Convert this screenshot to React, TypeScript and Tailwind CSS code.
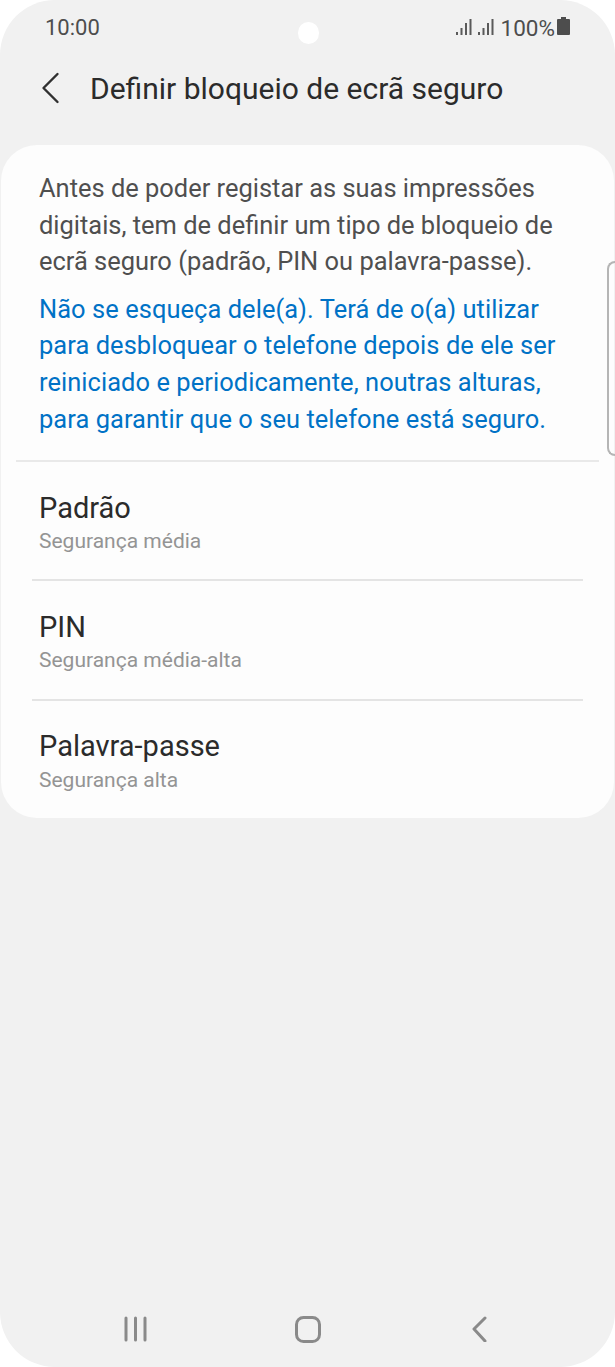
export default function App() {
  const rows = [
    { t: "Padrão", s: "Segurança média" },
    { t: "PIN", s: "Segurança média-alta" },
    { t: "Palavra-passe", s: "Segurança alta" },
  ];
  return (
    <div className="relative h-[1367px] w-[615px] overflow-hidden bg-white font-['Roboto',sans-serif]">
      <div className="relative flex h-[1367px] w-[615px] flex-col rounded-[55px] bg-[#f1f1f1] pl-px pr-px">
        <div className="flex h-[54px] items-center justify-between pl-[44px] pr-[44px] pt-[2px]">
          <span className="text-[22px] leading-[26px] text-[#4d4d4d]">10:00</span>
          <div className="flex items-center">
            <svg width="38" height="20" viewBox="0 0 38 20" fill="#5a5a5a" className="mr-[7px] mt-[-3px]">
              <rect x="0" y="15" width="2" height="3" />
              <rect x="4.5" y="11" width="2" height="7" />
              <rect x="9" y="6" width="2" height="12" />
              <rect x="13.5" y="2" width="2" height="16" />
              <rect x="22" y="15" width="2" height="3" />
              <rect x="26.5" y="11" width="2" height="7" />
              <rect x="31" y="6" width="2" height="12" />
              <rect x="35.5" y="2" width="2" height="16" />
            </svg>
            <span className="text-[22.5px] leading-[26px] text-[#4d4d4d]">100%</span>
            <svg width="13" height="20" viewBox="0 0 13 20" fill="#4d4d4d" className="ml-[2px] mt-[-4px]">
              <path d="M4 1h5v2h3a1 1 0 0 1 1 1v14a1 1 0 0 1-1 1H1a1 1 0 0 1-1-1V4a1 1 0 0 1 1-1h3z" />
            </svg>
          </div>
        </div>
        <div className="flex h-[71px] items-center pl-[40px] pb-[2px]">
          <svg width="20" height="32" viewBox="0 0 20 32" fill="none" stroke="#303030" strokeWidth="2.4" strokeLinecap="round" strokeLinejoin="round" className="mt-[-2px]">
            <path d="M16.5 2 L2.5 16 L16.5 30" />
          </svg>
          <span className="ml-[29px] text-[30px] leading-[36px] text-[#2b2b2b]">Definir bloqueio de ecrã seguro</span>
        </div>
        <div className="mt-[20px] rounded-[36px] bg-[#fdfdfd]">
          <div className="pl-[38px] pr-[38px] pb-[23px] pt-[25px] text-[25.45px] leading-[36.6px]">
            <p className="text-[#4f4f4f]">Antes de poder registar as suas impressões digitais, tem de definir um tipo de bloqueio de ecrã seguro (padrão, PIN ou palavra-passe).</p>
            <p className="mt-[11px] tracking-[0.06px] text-[#0072c6]">Não se esqueça dele(a). Terá de o(a) utilizar para desbloquear o telefone depois de ele ser reiniciado e periodicamente, noutras alturas, para garantir que o seu telefone está seguro.</p>
          </div>
          <div className="mx-[15px] h-[2px] bg-[#e9e9e9]" />
          {rows.map((r, i) => (
            <div key={r.t}>
              {i > 0 && <div className="mx-[31px] h-[2px] bg-[#e4e4e4]" />}
              <div className="flex h-[117.3px] flex-col pl-[38px] pt-[27.5px]">
                <span className="text-[29px] leading-[36px] text-[#2b2b2b]">{r.t}</span>
                <span className="mt-[3.5px] text-[21px] leading-[24px] text-[#949494]">{r.s}</span>
              </div>
            </div>
          ))}
        </div>
        <div className="mt-auto flex h-[51px] items-start justify-between pl-[122px] pr-[127px]">
          <svg width="26" height="26" viewBox="0 0 26 26" fill="none" stroke="#8a8a8a" strokeWidth="3" strokeLinecap="round">
            <path d="M3 2v22M12.5 2v22M22 2v22" />
          </svg>
          <svg width="26" height="27" viewBox="0 0 26 27" fill="none" stroke="#8a8a8a" strokeWidth="3" className="mr-[4px]">
            <rect x="1.5" y="1.5" width="23" height="24" rx="7" />
          </svg>
          <svg width="16" height="26" viewBox="0 0 16 26" fill="none" stroke="#8a8a8a" strokeWidth="3" strokeLinecap="round" strokeLinejoin="round">
            <path d="M14 2 L3 13 L14 25" />
          </svg>
        </div>
      </div>
      <div className="absolute left-[298px] top-[22px] h-[22px] w-[21px] rounded-full bg-white" />
      <div className="absolute left-[607px] top-[261px] h-[195px] w-[9px] rounded-l-[8px] border-2 border-r-0 border-[#b5b5b5]" />
    </div>
  );
}
